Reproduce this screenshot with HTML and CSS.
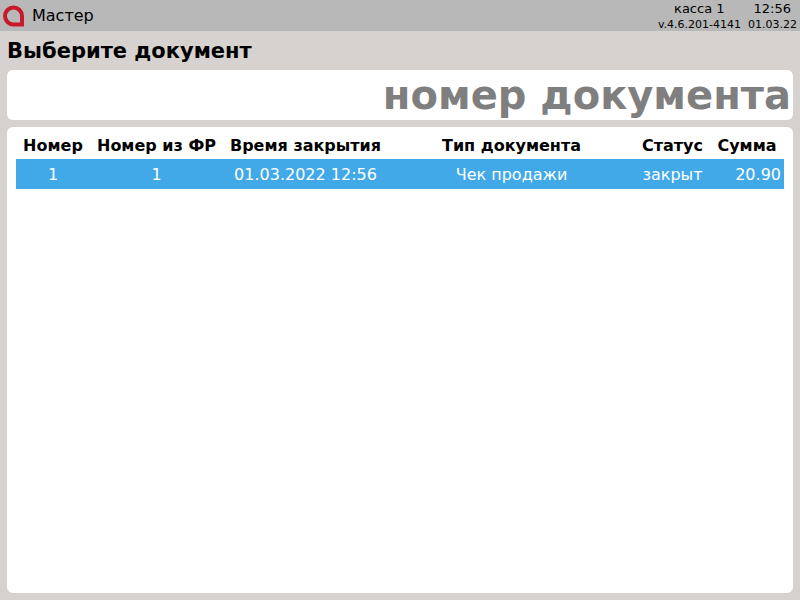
FILE: index.html
```html
<!DOCTYPE html>
<html lang="ru">
<head>
  <meta charset="UTF-8">
  <title>Мастер</title>
  <link rel="stylesheet" href="styles.css">
</head>
<body>

  <div class="top-bar">
    <svg class="logo" width="22" height="22" viewBox="0 0 22 22">
      <path d="M19 19.5 H10.5 A8.5 8.5 0 1 1 19 11 Z" fill="none" stroke="#c8192c" stroke-width="4"/>
    </svg>
    <span class="app-name">Мастер</span>
    <div class="status">
      <div class="status-row">
        <span class="kassa">касса 1</span>
        <span class="clock">12:56</span>
      </div>
      <div class="status-row small">
        <span>v.4.6.201-4141</span>
        <span class="date">01.03.22</span>
      </div>
    </div>
  </div>

  <h1>Выберите документ</h1>

  <div class="card search-box">номер документа</div>

  <div class="card table-box">
    <table>
      <colgroup>
        <col class="c1"><col class="c2"><col class="c3"><col class="c4"><col class="c5"><col class="c6">
      </colgroup>
      <thead>
        <tr>
          <th>Номер</th>
          <th>Номер из ФР</th>
          <th>Время закрытия</th>
          <th>Тип документа</th>
          <th>Статус</th>
          <th>Сумма</th>
        </tr>
      </thead>
      <tbody>
        <tr class="selected">
          <td>1</td>
          <td>1</td>
          <td>01.03.2022 12:56</td>
          <td>Чек продажи</td>
          <td>закрыт</td>
          <td class="sum">20.90</td>
        </tr>
      </tbody>
    </table>
  </div>

</body>
</html>
```

FILE: styles.css
```css
html, body {
  height: 100%;
}

body {
  margin: 0;
  display: flex;
  flex-direction: column;
  box-sizing: border-box;
  padding-bottom: 7px;
  overflow: hidden;
  font-family: "DejaVu Sans", sans-serif;
  background-color: #d6d2cf;
  color: #000;
}

.top-bar {
  height: 31px;
  flex: none;
  display: flex;
  align-items: center;
  padding-left: 3px;
  background-color: #b8b8b8;
}

.logo {
  flex: none;
}

.app-name {
  margin-left: 7px;
  font-size: 16px;
}

.status {
  margin-left: auto;
  padding-right: 3px;
  align-self: flex-start;
}

.status-row {
  display: flex;
  justify-content: flex-end;
  font-size: 13px;
  line-height: 18px;
}

.kassa {
  margin-right: 29px;
}

.clock {
  margin-right: 6px;
}

.status-row.small {
  margin-top: 1px;
  font-size: 11px;
  line-height: 12px;
}

.date {
  margin-left: 7px;
}

h1 {
  flex: none;
  margin: 0;
  padding: 7px 7px 0;
  height: 32px;
  font-size: 21px;
  line-height: 26px;
}

.card {
  margin: 0 7px;
  background-color: #fff;
  border-radius: 6px;
}

.search-box {
  flex: none;
  height: 50px;
  margin-bottom: 7px;
  padding-right: 2px;
  text-align: right;
  font-size: 40px;
  font-weight: bold;
  line-height: 50px;
  color: #7f7f7f;
}

.table-box {
  flex: 1;
  padding: 0 9px;
}

table {
  width: 768px;
  table-layout: fixed;
  border-collapse: collapse;
}

.c1 { width: 74px; }
.c2 { width: 133px; }
.c3 { width: 165px; }
.c4 { width: 247px; }
.c5 { width: 75px; }
.c6 { width: 74px; }

th {
  height: 28px;
  padding: 4px 0 0;
  font-size: 16px;
  text-align: center;
}

td {
  height: 30px;
  padding: 0;
  font-size: 16px;
  text-align: center;
}

.selected {
  background-color: #42a9e9;
  color: #fff;
}

td.sum {
  padding-right: 3px;
  text-align: right;
}
```
